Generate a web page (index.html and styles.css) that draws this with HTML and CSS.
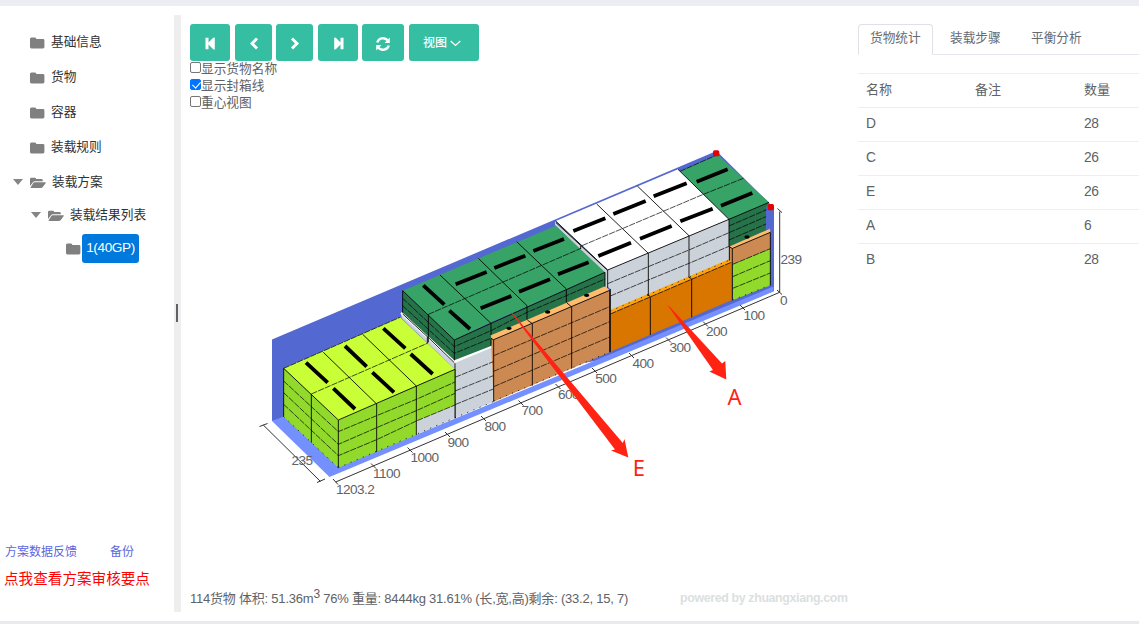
FILE: index.html
```html
<!DOCTYPE html>
<html lang="zh-CN">
<head>
<meta charset="utf-8">
<title>装载方案</title>
<link rel="stylesheet" href="styles.css">
</head>
<body>
<svg class="defs" width="0" height="0" aria-hidden="true">
  <symbol id="folder" viewBox="0 0 15 12"><path d="M0 2Q0 .5 1.4.5H5Q6.2.5 6.4 2H13Q14.4 2 14.4 3.4V10Q14.4 11.4 13 11.4H1.4Q0 11.4 0 10Z"/></symbol>
  <symbol id="open" viewBox="0 0 16 12"><path d="M0 9V2Q0 .8 1.2.8H4.8Q6 .8 6.2 2H11.4Q12.8 2 12.8 3.3V4.3H5Q3.7 4.3 2.8 5.4Z"/><path d="M4.7 5.2H15.3Q16.3 5.2 15.6 6.2L12.8 10Q12 11 10.8 11H1.2Q.1 11 .9 10L3.3 6Q3.8 5.2 4.7 5.2Z"/></symbol>
</svg>
<div class="app">
  <aside class="sidebar">
    <ul class="tree">
      <li class="node"><svg class="folder"><use href="#folder"/></svg><span>基础信息</span></li>
      <li class="node"><svg class="folder"><use href="#folder"/></svg><span>货物</span></li>
      <li class="node"><svg class="folder"><use href="#folder"/></svg><span>容器</span></li>
      <li class="node"><svg class="folder"><use href="#folder"/></svg><span>装载规则</span></li>
      <li class="node node-open"><i class="caret"></i><svg class="folder-open"><use href="#open"/></svg><span>装载方案</span></li>
      <li class="node node-child"><i class="caret"></i><svg class="folder-open"><use href="#open"/></svg><span>装载结果列表</span></li>
      <li class="node node-leaf"><svg class="folder"><use href="#folder"/></svg><span class="selected">1(40GP)</span></li>
    </ul>
    <div class="links"><a>方案数据反馈</a><a>备份</a></div>
    <a class="review">点我查看方案审核要点</a>
  </aside>
  <div class="splitter"><i class="grip"></i></div>
  <main class="viewer">
    <div class="toolbar">
      <button class="btn first"><svg width="11" height="13" viewBox="0 0 11 13"><path d="M.5.8H3.5V5.6L8.2.8Q9.8-.1 9.8 1V12Q9.8 13 8.2 12.2L3.5 7.4V12.2H.5Z"/></svg></button>
      <button class="btn prev"><svg width="10" height="13" viewBox="0 0 10 13"><path class="stroke" d="M8 1.5 3 6.5 8 11.5"/></svg></button>
      <button class="btn next"><svg width="10" height="13" viewBox="0 0 10 13"><path class="stroke" d="M2 1.5 7 6.5 2 11.5"/></svg></button>
      <button class="btn last"><svg width="11" height="13" viewBox="0 0 11 13"><path d="M10.5.8H7.5V5.6L2.8.8Q1.2-.1 1.2 1V12Q1.2 13 2.8 12.2L7.5 7.4V12.2H10.5Z"/></svg></button>
      <button class="btn refresh"><svg width="14" height="14" viewBox="0 0 14 14"><path class="arc" d="M1.3 5.5C2.5.7 8.7-.1 11.6 3.3M12.7 8.5C11.5 13.3 5.3 14.1 2.4 10.7"/><path d="M13.8.6V5.9H8.5ZM.2 13.4V8.1H5.5Z"/></svg></button>
      <button class="btn view"><span>视图</span><svg width="11" height="7" viewBox="0 0 11 7"><path class="thin" d="M.7 1 5.5 5.5 10.3 1"/></svg></button>
    </div>
    <div class="options">
      <label><input type="checkbox"><span>显示货物名称</span></label>
      <label><input type="checkbox" checked><span>显示封箱线</span></label>
      <label><input type="checkbox"><span>重心视图</span></label>
    </div>
    <svg class="stage" viewBox="190 113 668 475">
      <path fill="#5468d1" d="M272 339.5 716.5 151 774 208V291L600 360 272 421Z"/>
      <path fill="#7490ff" d="M272 421 285 416 338 467 773.5 286.5V291.5L329.5 477Z"/>

      <!-- container tail: white and dark green stacks, crates A -->
      <g class="load" transform="translate(540 140) scale(.33333)">
        <path fill="#38a366" d="M420 94 533 44 687 187 567 238Z"/>
        <path fill="#26734a" d="M567 238 687 187 678 204V272L567 320Z"/>
        <path fill="#ffbc6c" d="M567 320 690 266 691 279 578 326Z"/>
        <path fill="#cc8a52" d="M568 322 578 325 691 277V326L578 373 568 365Z"/>
        <path fill="#91d92a" d="M578 373 691 326V436L578 481Z"/>
        <path fill="#cbd2d9" d="M45 244 203 390V447L194 440V400L45 255ZM203 390 567 238V363L211 517 211 447 203 440Z"/>
        <path fill="#fff" d="M47 243 414 88 567 238 203 390Z"/>
        <path fill="#ffa40d" d="M211 510 567 358 576 366 211 522Z"/>
        <path fill="#d97600" d="M211 522 576 366V480L211 635Z"/>
        <path class="edge" d="M47 243 203 390 567 238 414 88M170 192 325 340V468M292 138 447 287V412M203 390V445M567 238V320M567 238 687 187M578 325 691 277V436M577 326V481M567 320 578 326M331 470V585M322 463 331 470M455 417V532M446 411 455 417M211 447V635M568 320V362"/>
        <path class="seam" d="M126 317 490 163 610 115M420 94 530 45M211 522 576 366M203 431 325 380 447 330 567 278M211 468 325 420 447 370 567 319M567 258 680 209M567 278 678 230M567 300 678 252M578 373 691 326M578 410 691 362M578 445 691 399"/>
        <path class="dots" d="M211 513 567 361M578 480 691 435"/>
        <path class="tape" d="M100 273 196 235M175 348 273 308M220 222 317 183M300 296 395 258M341 169 440 130M421 244 518 206M470 125 563 88M543 197 637 159"/>
        <ellipse cx="621" cy="291" rx="8" ry="5"/><rect class="pin" x="519" y="31" width="19" height="18" rx="5"/><rect class="pin" x="683" y="192" width="19" height="19" rx="5"/>
      </g>

      <!-- middle: green stack above crates E -->
      <g class="load" transform="translate(390 210) scale(.33333)">
        <path fill="#cbd2d9" d="M33 310 193 455 310 407V575L195 625V478L35 325Z"/>
        <path fill="#fff" d="M36 305 193 448 308 402 310 411 193 460 31 311Z"/>
        <path fill="#26734a" d="M38 242 193 390 303 340 645 187V232L303 385V408L193 451 38 308Z"/>
        <path fill="#38a366" d="M38 242 497 47 645 187 303 337 193 390Z"/>
        <path fill="#ffbc6c" d="M303 376 645 229 659 241 311 390 304 387Z"/>
        <path fill="#cc8a52" d="M311 389 659 241V427L311 575 304 408V386Z"/>
        <path class="edge" d="M38 308V242L193 390 303 340 645 187V230M193 390V451M115 313V397M150 195 303 340V375M265 145 411 287V328M380 95 529 237V278M498 38 652 180M303 385 311 389 659 241V427M311 389V575M412 330 427 341V527M531 279 545 291V476M303 387V408M195 460V625M572 108V117"/>
        <path class="seam" d="M115 313 573 115M38 265 193 410 303 362 411 307 529 257 645 207M38 287 193 430 303 385M311 437 659 290M311 484 659 335M311 530 659 381M195 502 310 455M195 543 310 497M195 584 310 537"/>
        <path class="dots" d="M311 573 659 426M195 623 310 575"/>
        <path class="tape" d="M100 226 163 284M178 302 240 357M197 223 290 186M272 295 364 258M313 174 406 137M387 245 480 208M430 123 522 87M504 193 596 157"/>
        <ellipse cx="357" cy="355" rx="8" ry="5"/><ellipse cx="473" cy="306" rx="8" ry="5"/><ellipse cx="590" cy="256" rx="8" ry="5"/>
      </g>

      <!-- door end: lime stack -->
      <g class="load" transform="translate(250 290) scale(.33333)">
        <path fill="#cbd2d9" d="M499 393 615 345V384L499 435Z"/>
        <path fill="#91d92a" d="M101 235 265 390 615 238V345L499 393V435L265 533 101 380Z"/>
        <path fill="#c8ff36" d="M101 235 450 82 615 238 265 390Z"/>
        <path class="edge" d="M101 380V235L265 390 615 238V384M265 390V533M184 312V458M220 187 380 342V486M338 133 499 288V435M458 72 532 140 613 218M532 140V160"/>
        <path class="seam" d="M184 312 532 160M101 235 450 82M101 273 265 425 380 377 499 328 615 276M101 308 265 463 380 413 499 362 615 310M101 343 265 497 380 449 499 393 615 345"/>
        <path class="dots" d="M265 533 615 383M101 380 265 533"/>
        <path class="tape" d="M168 218 233 278M285 168 350 230M400 115 466 175M250 295 315 357M367 247 432 307M482 192 548 252"/>
      </g>

      <path class="axis" d="M335.7 482 779.7 292.3V211.5M777.5 208.5 782 212.7M777 290 782 294.5M263.3 425 320.5 481.5M259.5 426.5 267.5 423.5M317 482.5 325 479M333 479 338 484.5M371 463.5 376 468.5M407.5 447.5 412.5 452.5M445 432 450 437M481 416 486 421M518.5 400.5 523.5 405.5M555.5 384 560.5 389M592 368 597 373M629 353 634 358M666 337.5 671 342.5M703 321.5 708 326.5M740 305 745 310"/>
      <g class="scale">
        <text x="780" y="305">0</text><text x="743.5" y="320">100</text><text x="706" y="336">200</text><text x="669.5" y="352">300</text><text x="632.5" y="368">400</text><text x="595.3" y="383">500</text><text x="558" y="399">600</text><text x="521.5" y="415">700</text><text x="484.5" y="431">800</text><text x="447.5" y="447">900</text><text x="410.5" y="462">1000</text><text x="373" y="478">1100</text><text x="336" y="494">1203.2</text><text x="291.5" y="465">235</text><text x="780.5" y="264">239</text>
      </g>
      <path class="arrow" d="M511 312.5 512.5 313 622.8 443 624.5 439 628.3 457.5 611 450.5 615 449.5Z"/>
      <path class="arrow" d="M667.8 305.5 669.5 306.5 722 363.5 725.3 361 726.3 379.5 709.3 371.5 713 370Z"/>
      <text class="mark" x="632.7" y="476">E</text><text class="mark" x="727.5" y="405">A</text>
    </svg>
    <footer class="status"><span class="summary">114货物 体积: 51.36m<sup>3</sup> 76% 重量: 8444kg 31.61% (长,宽,高)剩余: (33.2, 15, 7)</span><span class="credit">powered by zhuangxiang.com</span></footer>
  </main>
  <section class="details">
    <nav class="tabs"><a class="tab active">货物统计</a><a class="tab">装载步骤</a><a class="tab">平衡分析</a></nav>
    <div class="grid">
      <div class="row"><span>名称</span><span>备注</span><span>数量</span></div>
      <div class="row item"><span>D</span><span></span><span>28</span></div>
      <div class="row item"><span>C</span><span></span><span>26</span></div>
      <div class="row item"><span>E</span><span></span><span>26</span></div>
      <div class="row item"><span>A</span><span></span><span>6</span></div>
      <div class="row item"><span>B</span><span></span><span>28</span></div>
    </div>
  </section>
</div>
</body>
</html>
```

FILE: styles.css
```css
* { box-sizing: border-box; }
body { margin: 0; font: 12.7px/17px "Liberation Sans", "Noto Sans CJK SC", sans-serif; color: #606266; background: #fff; }
.defs { position: absolute; }
.app { display: flex; width: 1139px; height: 624px; padding-top: 9px; border-top: 6px solid #ebedf2; border-bottom: 3px solid #e9eaee; overflow: hidden; }
.sidebar { width: 174px; height: 597px; display: flex; flex-direction: column; flex: none; }
.tree { list-style: none; margin: 0; padding: 10px 0 0; color: #303133; flex: 1; }
.node { display: flex; align-items: center; height: 35px; padding-left: 30px; white-space: nowrap; }
.folder { width: 15px; height: 12px; fill: #808080; margin: 1px 6px 0 0; flex: none; }
.folder-open { width: 16px; height: 12px; fill: #808080; margin: 2px 6px 0 0; flex: none; }
.node-open { padding-left: 13px; height: 34px; }
.node-child { padding-left: 31px; height: 32px; }
.node-leaf { padding-left: 66px; height: 35px; }
.node-leaf .folder { margin-right: 1px; }
.caret { border: 5px solid transparent; border-top: 6px solid #858585; border-bottom: 0; margin-right: 7px; }
.selected { height: 29px; line-height: 28px; width: 57px; text-align: center; color: #fff; background: #0079dc; border-radius: 3px; font-size: 13.6px; letter-spacing: -.4px; }
.links { display: flex; gap: 33px; padding-left: 5px; font-size: 12px; color: #5a66e0; height: 17px; margin-bottom: 8px; }
.review { color: #f00; font-size: 14.6px; line-height: 20px; padding-left: 4px; margin-bottom: 23px; white-space: nowrap; }
.splitter { width: 7px; height: 597px; background: #eee; display: flex; align-items: center; justify-content: center; flex: none; }
.grip { width: 2px; height: 18px; background: #606266; margin: 0 2px 2px 0; }
.viewer { width: 677px; padding: 9px 0 0 9px; flex: none; }
.toolbar { display: flex; height: 37px; }
.btn { display: flex; align-items: center; justify-content: center; border: 0; border-radius: 3px; background: #36bea2; color: #fff; height: 37px; padding: 0; font: bold 12px "Liberation Sans", "Noto Sans CJK SC", sans-serif; }
.btn svg { fill: #fff; margin-top: 2px; }
.btn path.stroke { fill: none; stroke: #fff; stroke-width: 2.9; }
.btn path.arc { fill: none; stroke: #fff; stroke-width: 2.4; }
.btn path.thin { fill: none; stroke: #fff; stroke-width: 1.2; }
.first { width: 40px; margin-right: 5px; }
.prev { width: 37px; margin-right: 4px; }
.next { width: 37px; margin-right: 5px; }
.last { width: 40px; margin-right: 4px; }
.refresh { width: 42px; margin-right: 5px; }
.view { width: 70px; gap: 3px; font-weight: 500; padding-right: 4px; }
.view span { margin-top: -3px; }
.options { height: 52px; }
.options label { display: flex; height: 17px; line-height: 16px; }
.options input { appearance: none; width: 11px; height: 11px; margin: 1px 0 0; border: 1px solid #767676; border-radius: 2px; background: #fff; }
.options input:checked { border-color: #0075ff; background: #0075ff; }
.options input:checked::after { content: ""; display: block; width: 4px; height: 7px; margin: 0 0 0 3px; border: solid #fff; border-width: 0 1.5px 1.5px 0; transform: rotate(42deg); }
.stage { display: block; width: 668px; height: 475px; }
.load .edge { fill: none; stroke: #000; stroke-width: 2.6; }
.load .seam { fill: none; stroke: #000; stroke-width: 2.6; stroke-dasharray: 19 3; opacity: .8; }
.load .dots { fill: none; stroke: #000; stroke-width: 2.6; stroke-dasharray: 3 17; }
.load .tape { fill: none; stroke: #000; stroke-width: 11.5; }
.load .pin { fill: #e60000; }
.axis { fill: none; stroke: #333; stroke-width: 1; }
.scale { font-size: 13.6px; letter-spacing: -.55px; fill: #606266; }
.arrow { fill: #ff2314; }
.mark { font: 22px "Noto Sans", sans-serif; fill: #ff2314; }
.status { display: flex; height: 20px; line-height: 21px; white-space: nowrap; }
.summary { width: 490px; font-size: 13px; letter-spacing: -.22px; }
.status sup { font-size: 12px; line-height: 0; vertical-align: 5px; }
.credit { color: #dcdfe0; font-weight: bold; font-size: 12.4px; letter-spacing: -.36px; }
.details { flex: 1; padding-top: 9px; }
.tabs { display: flex; height: 31px; border-bottom: 1px solid #e4e7ed; color: #666a73; }
.tab { height: 31px; line-height: 27px; padding-left: 16px; width: 80px; border: 1px solid transparent; }
.tab.active { width: 75px; padding-left: 11px; border-color: #dfe1e8; border-bottom-color: #fff; border-radius: 4px 4px 0 0; }
.tab:last-child { padding-left: 17px; }
.grid { margin-top: 18px; border-top: 1px solid #ebeef5; }
.row { display: grid; grid-template-columns: 109px 109px 1fr; height: 34px; line-height: 31px; padding-left: 8px; border-bottom: 1px solid #ebeef5; font-size: 13px; }
.row:last-child { border-bottom: 0; }
.item { font-size: 13.8px; letter-spacing: -.5px; }
```
